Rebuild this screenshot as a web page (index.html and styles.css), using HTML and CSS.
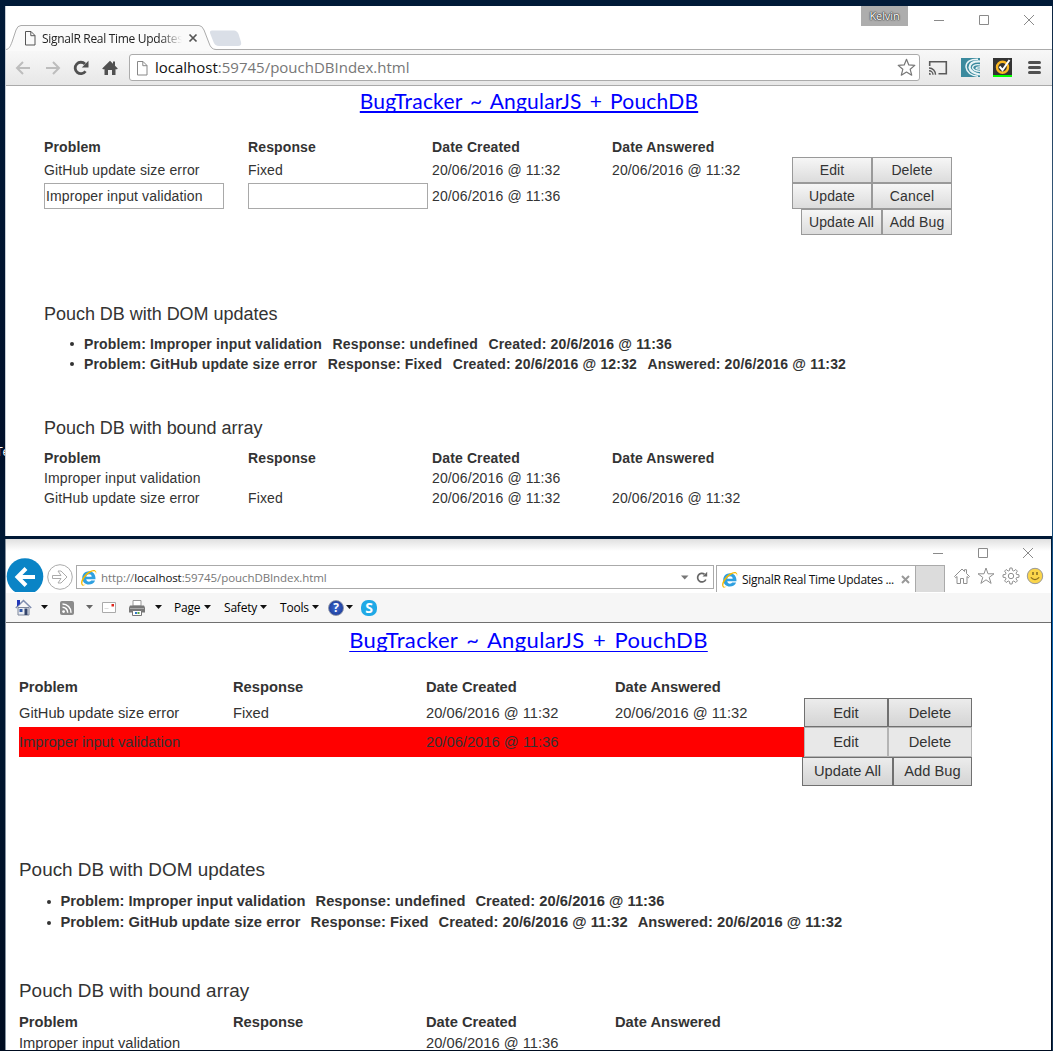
FILE: index.html
```html
<!DOCTYPE html>
<html lang="en">
<head>
<meta charset="utf-8">
<title>SignalR Real Time Updates</title>
<link rel="stylesheet" href="styles.css">
</head>
<body>
<svg width="0" height="0" class="defs">
  <defs>
    <symbol id="ie" viewBox="0 0 16 16">
      <path d="M14.6 9.6H5.9c.1 1.5 1.2 2.3 2.5 2.3 1 0 1.7-.4 2.1-1.1h3.7c-.8 2.400-3.100 3.900-5.900 3.900-3.500 0-6.200-2.500-6.200-6.200s2.800-6.300 6.300-6.300c3.800 0 6.300 2.800 6.200 7.400zM5.900 7.200h5.100c-.1-1.400-1.100-2.200-2.500-2.200s-2.400.8-2.600 2.200z" fill="#2fa0e0"/>
      <path d="M1.800 15.300C.2 13.700 1 10 4 6.300 7.300 2.300 12 .1 14.300 1.300c1.200.7 1.300 2.100.6 3.800.2-1.400 0-2.300-.9-2.700-1.900-.8-5.700 1.300-8.600 4.700-2.600 3-3.700 6.100-2.900 7.200.5.700 1.700.6 3.200 0-1.600 1.200-3 1.800-3.900 1z" fill="#f5b800"/>
    </symbol>
    <symbol id="page" viewBox="0 0 12 16">
      <path d="M1.500 1.500h5.500l4 4v9.500h-9.500zM6.800 1.500v4.200h4.200" fill="none" stroke="currentColor"/>
    </symbol>
  </defs>
</svg>

<div class="desktop">
  <span class="desktop-label">Te</span>

  <section class="window chrome">
    <header class="tabstrip">
      <div class="tab">
        <svg class="tab-shape" width="280" height="26" viewBox="0 0 280 26">
          <path d="M0 24.500C4 24.500 5 22 7 17L11 5Q12.500 .5 16 .5H194Q197 .5 199 5L204 18Q206 24.500 211 24.500V26H0z" fill="#fafafa"/>
          <path d="M0 24.500C4 24.500 5 22 7 17L11 5Q12.500 .5 16 .5H194Q197 .5 199 5L204 18Q206 24.500 211 24.500H280" fill="none" stroke="#ababab"/>
          <path d="M207 5.500H229Q232 5.500 233.500 9L236 17Q237 21 233 21H214Q210 21 208.500 17L205 8Q204.500 5.500 207 5.500z" fill="#dadfe7"/>
        </svg>
        <svg class="tab-icon" width="12" height="16"><use href="#page"/></svg>
        <span class="tab-title">SignalR Real Time Updates</span>
        <svg class="tab-close" width="10" height="10"><path d="M1.500 1.500l7 7m0-7l-7 7" stroke="#555" stroke-width="1.700"/></svg>
      </div>
      <div class="profile">Kelvin</div>
      <div class="controls">
        <svg width="12" height="12"><path d="M1 6.500h10" stroke="#8a8a8a"/></svg>
        <svg width="12" height="12"><path d="M1.500 1.500h9v9h-9z" fill="none" stroke="#8a8a8a"/></svg>
        <svg width="12" height="12"><path d="M1 1l10 10M11 1L1 11" stroke="#8a8a8a"/></svg>
      </div>
    </header>
    <nav class="toolbar">
      <svg class="t-back" width="16" height="16"><path d="M15 8H2m6-6L2 8l6 6" fill="none" stroke="#bdbdbd" stroke-width="2"/></svg>
      <svg class="t-fwd" width="16" height="16"><path d="M1 8h13M8 2l6 6-6 6" fill="none" stroke="#bdbdbd" stroke-width="2"/></svg>
      <svg class="t-reload" width="16" height="16"><path d="M12.500 11.300A5.700 5.700 0 1 1 12 4" fill="none" stroke="#505050" stroke-width="2.800"/><path d="M15.500 .8v6.700H8.800z" fill="#505050"/></svg>
      <svg class="t-home" width="16" height="16"><path d="M8 .8l3 3V1.500h2v4.300l2.800 2.700-.8.800h-1.500V15H10v-5H6v5H2.500V9.300H1L.2 8.500z" fill="#505050"/></svg>
      <div class="omnibox">
        <svg class="o-page" width="12" height="16"><use href="#page"/></svg>
        <span class="o-url"><b>localhost</b>:59745/pouchDBIndex.html</span>
        <svg class="o-star" width="19" height="19" viewBox="0 0 19 19"><path d="M9.500 1.300l2.300 5.600 6 .5-4.600 3.900 1.500 5.900-5.200-3.200-5.200 3.200 1.500-5.900L1.200 7.400l6-.5z" fill="none" stroke="#777" stroke-width="1.200" stroke-linejoin="round"/></svg>
      </div>
      <svg class="t-cast" width="20" height="16"><path d="M1.700 6V1.700h16.600v12.100H10.500" fill="none" stroke="#5a5a5a" stroke-width="1.600"/><path d="M1 8a6.500 6.500 0 0 1 6.500 6.800M1 10.800a4 4 0 0 1 4 4" fill="none" stroke="#5a5a5a" stroke-width="1.400"/><path d="M1 12.800a2 2 0 0 1 2 2H1z" fill="#5a5a5a"/></svg>
      <svg class="t-swirl" width="19" height="19"><path d="M0 0h19v19H0z" fill="#3b8a9e"/><path d="M17 1.300Q5 1 5 9q1 8 12 9.300" fill="none" stroke="#e9f4f6" stroke-width="1.500"/><path d="M19 3.500Q9 3 8.500 9.500q1 5.500 10.500 7" fill="none" stroke="#e9f4f6" stroke-width="2.200"/><path d="M19 6.800q-7-.8-7.500 3 1 3.500 7.500 3.500M19 9q-3.500-.2-4 1.200.8 1.200 4 .8" fill="none" stroke="#e9f4f6" stroke-width="1.300"/></svg>
      <svg class="t-norton" width="19" height="19"><path d="M0 0h19v17H0z" fill="#333"/><path d="M0 17h19v2H0z" fill="#0f0"/><circle cx="9.500" cy="9.300" r="5.500" fill="none" stroke="#fbb823" stroke-width="2.400"/><path d="M6.500 8.500l3 3.500L16.500 2" fill="none" stroke="#fff" stroke-width="2"/></svg>
      <svg class="t-menu" width="13" height="13"><path d="M1.500 1.500h10m-10 5h10m-10 5h10" stroke="#505050" stroke-width="3" stroke-linecap="round"/></svg>
    </nav>
    <main class="page">
      <a class="title">BugTracker ~ AngularJS + PouchDB</a>
      <div class="grid">
        <div class="row head"><b>Problem</b><b>Response</b><b>Date Created</b><b>Date Answered</b></div>
        <div class="row edit"><span>GitHub update size error</span><span>Fixed</span><span>20/06/2016 @ 11:32</span><span>20/06/2016 @ 11:32</span><div class="pair"><button>Edit</button><button>Delete</button></div></div>
        <div class="row edit"><input type="text" value="Improper input validation"><input type="text"><span>20/06/2016 @ 11:36</span><span></span><div class="pair"><button>Update</button><button>Cancel</button></div></div>
        <div class="foot"><button>Update All</button><button>Add Bug</button></div>
      </div>
      <h4 class="first">Pouch DB with DOM updates</h4>
      <ul>
        <li><span>Problem: Improper input validation</span><span>Response: undefined</span><span>Created: 20/6/2016 @ 11:36</span></li>
        <li><span>Problem: GitHub update size error</span><span>Response: Fixed</span><span>Created: 20/6/2016 @ 12:32</span><span>Answered: 20/6/2016 @ 11:32</span></li>
      </ul>
      <h4 class="second">Pouch DB with bound array</h4>
      <div class="grid">
        <div class="row"><b>Problem</b><b>Response</b><b>Date Created</b><b>Date Answered</b></div>
        <div class="row"><span>Improper input validation</span><span></span><span>20/06/2016 @ 11:36</span></div>
        <div class="row"><span>GitHub update size error</span><span>Fixed</span><span>20/06/2016 @ 11:32</span><span>20/06/2016 @ 11:32</span></div>
      </div>
    </main>
  </section>

  <section class="window explorer">
    <header class="ie-title">
      <div class="controls">
        <svg width="12" height="12"><path d="M1 6.500h10" stroke="#8a8a8a"/></svg>
        <svg width="12" height="12"><path d="M1.500 1.500h9v9h-9z" fill="none" stroke="#8a8a8a"/></svg>
        <svg width="12" height="12"><path d="M1 1l10 10M11 1L1 11" stroke="#8a8a8a"/></svg>
      </div>
    </header>
    <nav class="ie-nav">
      <svg class="ie-back" width="38" height="34"><circle cx="19" cy="18.500" r="18.300" fill="#0a84c6"/><path d="M29 19H12m8-8.500L11.500 19l8.500 8.500" fill="none" stroke="#fff" stroke-width="4"/></svg>
      <svg class="ie-fwd" width="26" height="26"><circle cx="13" cy="13" r="12.300" fill="#fff" stroke="#ababab"/><path d="M5.500 11.500h8.500l-3-4.500h3l6 6-6 6h-3l3-4.500H5.500z" fill="none" stroke="#ababab"/></svg>
      <div class="ie-addr">
        <svg class="ie-logo" width="17" height="17"><use href="#ie"/></svg>
        <span class="ie-url">http://<b>localhost</b>:59745/pouchDBIndex.html</span>
        <svg class="ie-drop" width="8" height="5"><path d="M0 .5h7.500L3.700 4.500z" fill="#777"/></svg>
        <svg class="ie-reload" width="12" height="13"><path d="M9.800 8.500A4.300 4.300 0 1 1 8.500 3.200" fill="none" stroke="#666" stroke-width="1.700"/><path d="M6.500 5.500h4.700V.8z" fill="#666"/></svg>
      </div>
      <div class="ie-tab">
        <svg class="ie-logo" width="17" height="17"><use href="#ie"/></svg>
        <span>SignalR Real Time Updates ...</span>
        <svg class="ie-x" width="9" height="9"><path d="M1 1l7 7m0-7L1 8" stroke="#999" stroke-width="2"/></svg>
      </div>
      <div class="ie-newtab"></div>
      <div class="ie-tools">
        <svg width="18" height="18" viewBox="0 0 18 18"><path d="M1.500 9.500L9 2l2.500 2.500V2.700h2v3.800l3 3-1.200 1.200-1.300-1.200v7h-3.500v-5h-3v5H4v-7l-1.300 1.200z" fill="none" stroke="#8f8f8f"/></svg>
        <svg width="18" height="18" viewBox="0 0 18 18"><path d="M9 1l2 5.800h6l-4.800 3.600 1.900 6L9 12.800l-5.100 3.600 1.900-6L1 6.800h6z" fill="none" stroke="#8f8f8f"/></svg>
        <svg width="18" height="18" viewBox="0 0 18 18"><path d="M7.500 3.500l.4-2.500h2.200l.4 2.500 1.300.5 2-1.500 1.600 1.600-1.400 2 .5 1.300 2.500.4v2.400l-2.500.4-.5 1.300 1.400 2-1.600 1.600-2-1.500-1.300.5-.4 2.500H7.900l-.4-2.500-1.300-.5-2 1.500-1.600-1.600 1.400-2-.5-1.300L1 10.200V7.800l2.500-.4.5-1.300-1.400-2 1.600-1.600 2 1.500z" fill="none" stroke="#8f8f8f"/><circle cx="9" cy="9" r="2.700" fill="none" stroke="#8f8f8f"/></svg>
        <svg width="18" height="18" viewBox="0 0 18 18"><circle cx="9" cy="9" r="7.700" fill="#fbd54a" stroke="#999"/><path d="M7 5v3M11 5v3" stroke="#7a6220" stroke-width="1.400"/><path d="M4.800 10.300q4.200 4.500 8.400 0" fill="none" stroke="#8a6d1c" stroke-width="1.200"/></svg>
      </div>
    </nav>
    <div class="commands">
      <svg class="c-home" width="17" height="17"><path d="M3 8.500h11v7.500H3z" fill="#e9ecf2" stroke="#7c869a"/><path d="M.8 9L8.500 1.500 16.200 9" fill="none" stroke="#7f8daf" stroke-width="1.600"/><path d="M2 1h3v4L2 7.500z" fill="#2338b8"/><path d="M4.500 10h3v3h-3z" fill="#2d55a8"/><path d="M9.500 9.500h3V16h-3z" fill="#33446a"/></svg>
      <svg class="caret c1" width="7" height="5"><path d="M0 0h7L3.500 4z"/></svg>
      <svg class="c-rss" width="14" height="14"><rect width="14" height="14" rx="2" fill="#8b8b8b"/><circle cx="3.600" cy="10.600" r="1.400" fill="#fff"/><path d="M2.500 6.300a5.200 5.200 0 0 1 5.200 5.400M2.500 3a8.500 8.500 0 0 1 8.500 8.700" fill="none" stroke="#fff" stroke-width="1.500"/></svg>
      <svg class="caret c2" width="7" height="5"><path d="M0 0h7L3.500 4z"/></svg>
      <svg class="c-mail" width="14" height="11"><path d="M.5.5h13v10H.5z" fill="#fff" stroke="#aaa"/><path d="M9.500 2h2.500v2.500H9.500z" fill="#e0261c"/><path d="M2.500 6.500h4" stroke="#ddd"/></svg>
      <svg class="c-print" width="16" height="16"><path d="M4 .5h8V6H4z" fill="#fff" stroke="#999"/><path d="M1 5.500h14l1 2v5H0v-5z" fill="#777"/><path d="M1 8.500h14" stroke="#aaa"/><path d="M3.500 10.500h9v5h-9z" fill="#fff" stroke="#777"/><path d="M6 12h2v2H6z" fill="#3677c8"/><path d="M8.500 12h2v2h-2z" fill="#58a743"/></svg>
      <svg class="caret c3" width="7" height="5"><path d="M0 0h7L3.500 4z"/></svg>
      <span class="c-page">Page</span><svg class="caret c4" width="7" height="5"><path d="M0 0h7L3.500 4z"/></svg>
      <span class="c-safety">Safety</span><svg class="caret c4" width="7" height="5"><path d="M0 0h7L3.500 4z"/></svg>
      <span class="c-tools">Tools</span><svg class="caret c4" width="7" height="5"><path d="M0 0h7L3.500 4z"/></svg>
      <span class="c-help">?</span><svg class="caret c5" width="7" height="5"><path d="M0 0h7L3.500 4z"/></svg>
      <span class="c-skype">S</span>
    </div>
    <main class="page">
      <a class="title">BugTracker ~ AngularJS + PouchDB</a>
      <div class="grid">
        <div class="row head"><b>Problem</b><b>Response</b><b>Date Created</b><b>Date Answered</b></div>
        <div class="row edit open"><span>GitHub update size error</span><span>Fixed</span><span>20/06/2016 @ 11:32</span><span>20/06/2016 @ 11:32</span><div class="pair"><button>Edit</button><button>Delete</button></div></div>
        <div class="row edit locked"><span>Improper input validation</span><span></span><span>20/06/2016 @ 11:36</span><span></span><div class="pair"><button disabled>Edit</button><button disabled>Delete</button></div></div>
        <div class="foot"><button>Update All</button><button>Add Bug</button></div>
      </div>
      <h4 class="first">Pouch DB with DOM updates</h4>
      <ul>
        <li><span>Problem: Improper input validation</span><span>Response: undefined</span><span>Created: 20/6/2016 @ 11:36</span></li>
        <li><span>Problem: GitHub update size error</span><span>Response: Fixed</span><span>Created: 20/6/2016 @ 11:32</span><span>Answered: 20/6/2016 @ 11:32</span></li>
      </ul>
      <h4 class="second">Pouch DB with bound array</h4>
      <div class="grid">
        <div class="row"><b>Problem</b><b>Response</b><b>Date Created</b><b>Date Answered</b></div>
        <div class="row"><span>Improper input validation</span><span></span><span>20/06/2016 @ 11:36</span></div>
      </div>
    </main>
  </section>
</div>
</body>
</html>
```
FILE: styles.css
```css
* { box-sizing: border-box; }
body { margin: 0; }
svg { display: block; flex: none; }
.defs { position: absolute; }
.desktop {
  position: relative;
  width: 1053px;
  height: 1051px;
  overflow: hidden;
  background: linear-gradient(#001a38 0, #00102a 450px, #001b38 560px, #000c20 100%);
  font-family: "Open Sans", "Noto Sans", sans-serif;
}
.desktop::after {
  content: "";
  position: absolute;
  right: 0;
  top: 6px;
  width: 1px;
  height: 1045px;
  background: linear-gradient(#0b2440 0, #35597a 200px, #1b4265 500px, #0a5fa8 600px, #0868b8 740px, #1a3a5c 800px, #13304e 100%);
}
.desktop-label { position: absolute; left: -4px; top: 443px; font-size: 12px; line-height: 18px; color: #fff; }
.window { position: absolute; left: 5px; width: 1047px; background: #fff; overflow: hidden; display: flex; flex-direction: column; }
.window > * { flex: none; }
.controls { display: flex; gap: 33px; }

/* Upper browser */
.chrome { top: 6px; height: 530px; border-left: 1px solid #c5ccd4; }
.tabstrip { height: 44px; display: flex; justify-content: flex-end; background: linear-gradient(#ababab, #ababab) 0 43px / 100% 1px no-repeat; }
.chrome .controls { padding: 8px 17.500px 0 24.500px; }
.profile { width: 47px; height: 20px; background: #adadad; color: #fff; font-size: 11px; line-height: 20px; text-align: center; letter-spacing: -.1px; text-shadow: 0 0 1px #222, 0 0 2px #333, 0 0 1px #333; }
.tab { position: relative; width: 280px; height: 26px; margin: 19px auto 0 -1px; display: flex; align-items: center; }
.tab-shape { position: absolute; left: 0; top: 0; }
.tab-icon { position: relative; margin-left: 19px; color: #555; }
.tab-title { position: relative; width: 140px; margin-left: 6px; font-size: 12px; letter-spacing: -.3px; white-space: nowrap; overflow: hidden; color: #222; -webkit-mask-image: linear-gradient(90deg, #000 118px, transparent 140px); mask-image: linear-gradient(90deg, #000 118px, transparent 140px); }
.tab-close { position: relative; margin-left: 6px; }
.toolbar { height: 36px; display: flex; align-items: center; background: linear-gradient(#f8f8f8, #e7e7e7); border-bottom: 1px solid #aaa; }
.t-back { margin-left: 9px; }
.t-fwd { margin-left: 14px; }
.t-reload { margin-left: 12px; }
.t-home { margin-left: 13px; }
.omnibox { margin-left: 11px; width: 791px; height: 27px; border: 1px solid #ababab; border-radius: 3px; background: #fff; display: flex; align-items: center; }
.o-page { margin-left: 6px; color: #888; }
.o-url { margin-left: 7px; padding-bottom: 2px; font-size: 15px; color: #777; white-space: nowrap; }
.o-url b, .ie-url b { font-weight: 400; color: #111; }
.o-star { margin-left: auto; margin-right: 3px; }
.t-cast { margin-left: 8px; }
.t-swirl { margin-left: 13px; }
.t-norton { margin-left: 13px; }
.t-menu { margin-left: 16px; }

/* Bug tracker page, shared by both browsers */
.page { flex: none; display: flex; flex-direction: column; font-family: "Liberation Sans", Arial, sans-serif; color: #333; }
.title { align-self: center; font-family: Lato, "Open Sans", sans-serif; color: #00f; white-space: nowrap; text-decoration: underline; text-decoration-skip-ink: none; text-underline-offset: 2px; }
.row { display: grid; align-items: center; white-space: nowrap; }
.pair { display: flex; height: 100%; }
.pair button { flex: 1; }
.foot { display: flex; justify-content: flex-end; }
button { margin: 0; padding: 0; font: inherit; color: #333; letter-spacing: inherit; border: 1px solid #999; background: linear-gradient(#f6f6f6, #dcdcdc); }
input { height: 26px; width: 180px; border: 1px solid #a9a9a9; padding: 0 1px; margin: 0; font: inherit; color: #333; letter-spacing: inherit; }
h4 { margin: 0; font-weight: 400; }
ul { margin: 0; list-style: none; padding: 0; font-weight: 700; }
li { display: flex; align-items: center; white-space: nowrap; }
li::before { content: ""; width: 4px; height: 4px; border-radius: 50%; background: #333; }

.chrome .page { padding-left: 38px; font-size: 14px; line-height: 20px; letter-spacing: .13px; }
.chrome .title { font-size: 21px; line-height: 30px; margin-left: -38px; height: 51px; letter-spacing: .2px; word-spacing: 2.4px; text-decoration-thickness: 2px; }
.chrome .grid { width: 908px; }
.chrome .row { grid-template-columns: 204px 184px 180px 180px 160px; height: 20px; }
.chrome .row.edit { height: 26px; }
.chrome .foot { height: 26px; }
.chrome .foot button:first-child { width: 81px; }
.chrome .foot button:last-child { width: 70px; }
.chrome h4 { font-size: 18px; letter-spacing: -.03px; }
.chrome .first { margin: 69px 0 10px; }
.chrome .second { margin: 44px 0 10px; }
.chrome li { height: 20px; gap: 10.5px; padding-left: 25.5px; letter-spacing: .16px; }

/* Lower browser */
.explorer { top: 539px; height: 511px; width: 1046px; border-left: 1px solid #8793a0; }
.ie-title { height: 26px; background: linear-gradient(#e0e0e0, #fff 12px); display: flex; justify-content: flex-end; }
.ie-title .controls { padding: 8px 17.500px 0 0; }
.ie-nav { height: 28px; display: flex; align-items: flex-start; font-size: 12px; }
.ie-back { margin-top: -7px; }
.ie-fwd { margin: -1px 0 0 3px; }
.ie-addr { width: 638px; height: 24px; margin-left: 3px; border: 1px solid #aaa; display: flex; align-items: center; font-size: 11.5px; color: #777; }
.ie-logo { margin-left: 3px; }
.ie-url { margin-left: 4px; white-space: nowrap; letter-spacing: -.08px; }
.ie-drop { margin-left: auto; }
.ie-reload { margin: 0 5px 0 7px; }
.ie-tab { width: 200px; height: 27px; margin-left: 2px; border: 1px solid #aaa; border-bottom: 0; display: flex; align-items: center; color: #111; letter-spacing: -.3px; white-space: nowrap; }
.ie-tab .ie-logo { margin-left: 4px; margin-right: 4px; }
.ie-x { margin-left: auto; margin-right: 5px; }
.ie-newtab { width: 29px; height: 27px; background: #dcdcdc; border: 1px solid #aaa; border-left: 0; border-bottom: 0; }
.ie-tools { display: flex; gap: 6.5px; margin: 2px 0 0 7.5px; }
.commands { height: 30px; background: #f6f6f6; border-bottom: 1px solid #707070; display: flex; align-items: center; font-size: 12px; letter-spacing: -.2px; color: #000; }
.caret { fill: #111; }
.c-home { margin-left: 9px; }
.c1 { margin-left: 9px; }
.c-rss { margin-left: 12px; }
.c2 { margin-left: 12px; fill: #666; }
.c-mail { margin-left: 9px; }
.c-print { margin-left: 13px; }
.c3 { margin-left: 10px; }
.c-page { margin-left: 12px; width: 27px; }
.c-safety { margin-left: 13px; width: 33px; }
.c-tools { margin-left: 13px; width: 29px; }
.c4 { margin-left: 3px; }
.c-help { margin-left: 9px; width: 16px; height: 16px; border-radius: 50%; border: 1px solid #8b93a8; background: radial-gradient(#3c6ad0, #17328e); color: #fff; font-weight: 700; line-height: 14px; text-align: center; }
.c5 { margin-left: 2px; }
.c-skype { margin-left: 8px; width: 16px; height: 16px; border-radius: 7px; background: #1fa9e6; color: #fff; font-weight: 700; font-size: 14px; line-height: 16px; text-align: center; }

.explorer .page { padding-left: 13px; font-size: 14.7px; line-height: 21px; letter-spacing: .01px; }
.explorer .title { font-size: 22px; line-height: 34px; margin-left: -13px; height: 54px; letter-spacing: .35px; word-spacing: 2.4px; text-decoration-thickness: 1px; text-underline-offset: 3px; }
.explorer .grid { width: 953px; }
.explorer .row { grid-template-columns: 214px 193px 189px 189px 168px; height: 21px; }
.explorer .row.edit { height: 29px; }
.explorer .open > span, .explorer .open button { padding-top: 1px; }
.explorer .row.locked { height: 30px; background: #f00; }
.explorer button { border-color: #707070; background: linear-gradient(#ececec, #d4d4d4); }
.explorer button:disabled { border-color: #b4b4b4; background: #e8e8e8; color: #333; }
.explorer .foot { height: 29px; }
.explorer .foot button:first-child { width: 91px; }
.explorer .foot button:last-child { width: 79px; }
.explorer h4 { font-size: 18.9px; }
.explorer .first { margin: 73px 0 11px; }
.explorer .second { margin: 47px 0 11px; }
.explorer li { height: 21px; gap: 10px; padding-left: 27.5px; letter-spacing: .03px; }
```
